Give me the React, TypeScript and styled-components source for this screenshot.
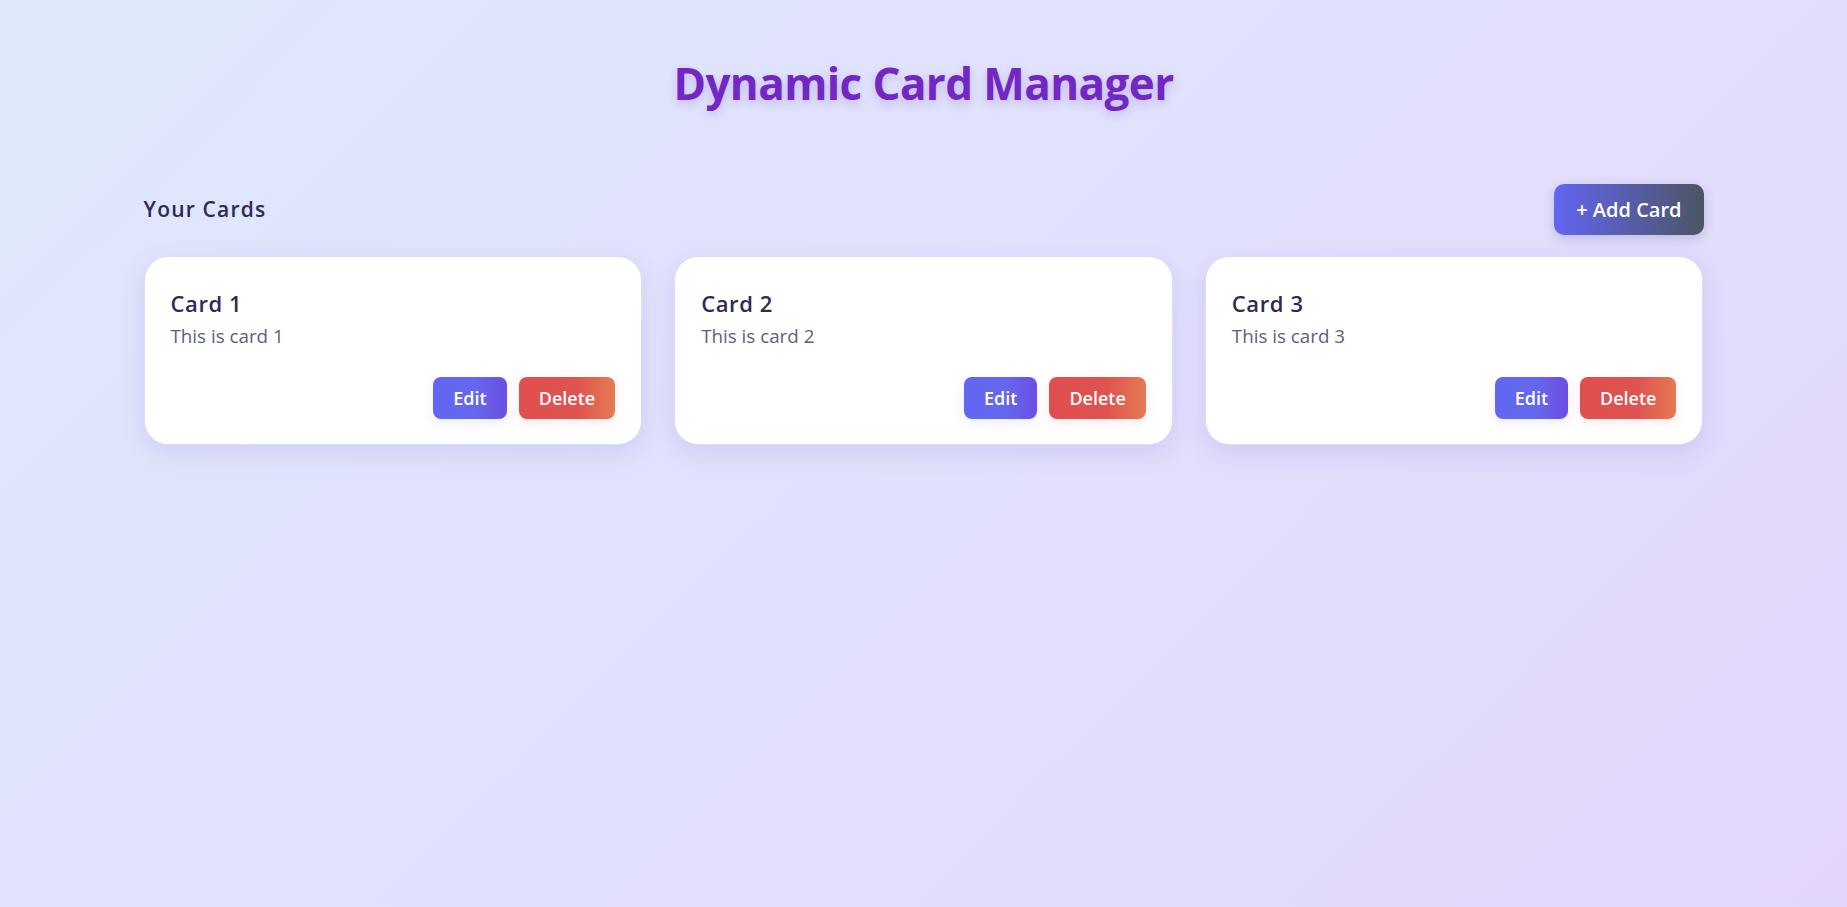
import React, { useState } from 'react';
import styled, { createGlobalStyle } from 'styled-components';

interface CardItem {
  id: number;
  title: string;
  text: string;
}

const GlobalStyle = createGlobalStyle`
  * {
    box-sizing: border-box;
  }

  html,
  body {
    margin: 0;
    padding: 0;
    min-height: 100%;
  }

  body {
    font-family: 'Open Sans', 'Noto Sans', 'Liberation Sans', sans-serif;
    background: linear-gradient(135deg, #dfe8fb 0%, #e1e1fc 50%, #e4d6fb 100%);
    background-attachment: fixed;
    min-height: 100vh;
  }
`;

const initialCards: CardItem[] = [
  { id: 1, title: 'Card 1', text: 'This is card 1' },
  { id: 2, title: 'Card 2', text: 'This is card 2' },
  { id: 3, title: 'Card 3', text: 'This is card 3' },
];

const App: React.FC = () => {
  const [cards, setCards] = useState<CardItem[]>(initialCards);

  const addCard = () => {
    const id = cards.length ? Math.max(...cards.map((c) => c.id)) + 1 : 1;
    setCards([...cards, { id, title: `Card ${id}`, text: `This is card ${id}` }]);
  };

  const deleteCard = (id: number) => {
    setCards(cards.filter((c) => c.id !== id));
  };

  return (
    <>
      <GlobalStyle />
      <Page>
        <Title>Dynamic Card Manager</Title>

        <Container>
          <Header>
            <SectionTitle>Your Cards</SectionTitle>
            <AddButton onClick={addCard}>+ Add Card</AddButton>
          </Header>

          <Grid>
            {cards.map((card) => (
              <Card key={card.id}>
                <CardTitle>{card.title}</CardTitle>
                <CardText>{card.text}</CardText>
                <Actions>
                  <ActionButton $variant="edit">Edit</ActionButton>
                  <ActionButton $variant="delete" onClick={() => deleteCard(card.id)}>
                    Delete
                  </ActionButton>
                </Actions>
              </Card>
            ))}
          </Grid>
        </Container>
      </Page>
    </>
  );
};

// Styled Components
const Page = styled.div`
  min-height: 100vh;
  padding: 57px 0 40px;
`;

const Title = styled.h1`
  margin: 0 0 74px;
  text-align: center;
  font-size: 44px;
  font-weight: 700;
  line-height: 1.2;
  letter-spacing: -0.6px;
  color: #7227c5;
  text-shadow: 0 4px 10px rgba(110, 60, 190, 0.25);
`;

const Container = styled.div`
  max-width: 1560px;
  margin: 0 auto;
`;

const Header = styled.div`
  display: flex;
  align-items: center;
  justify-content: space-between;
  margin-bottom: 21px;
`;

const SectionTitle = styled.h2`
  margin: 0;
  font-size: 21px;
  font-weight: 600;
  letter-spacing: 1.2px;
  color: #2e2a55;
`;

const AddButton = styled.button`
  height: 51px;
  padding: 0 22px;
  border: none;
  border-radius: 10px;
  font-family: inherit;
  font-size: 20px;
  font-weight: 600;
  color: #ffffff;
  background: linear-gradient(90deg, #6366f1 0%, #4b5563 100%);
  box-shadow: 0 4px 12px rgba(60, 60, 110, 0.2);
  cursor: pointer;
`;

const Grid = styled.div`
  display: grid;
  grid-template-columns: repeat(3, 1fr);
  gap: 32px;
`;

const Card = styled.div`
  display: flex;
  flex-direction: column;
  min-height: 189px;
  padding: 31px 26px 25px;
  background: #ffffff;
  border-radius: 24px;
  border: 1px solid rgba(200, 195, 240, 0.6);
  box-shadow: 0 8px 24px rgba(110, 95, 210, 0.16);
`;

const CardTitle = styled.h3`
  margin: 0 0 5px;
  font-size: 22px;
  font-weight: 600;
  letter-spacing: 0.6px;
  color: #2e2a55;
`;

const CardText = styled.p`
  margin: 0;
  font-size: 18.8px;
  color: #5b5f7e;
`;

const Actions = styled.div`
  display: flex;
  justify-content: flex-end;
  gap: 12px;
  margin-top: auto;
`;

const ActionButton = styled.button<{ $variant: 'edit' | 'delete' }>`
  height: 42px;
  padding: 0 20px;
  border: none;
  border-radius: 8px;
  font-family: inherit;
  font-size: 18px;
  font-weight: 600;
  color: #ffffff;
  cursor: pointer;
  background: ${({ $variant }) =>
    $variant === 'edit'
      ? 'linear-gradient(90deg, #6366f1 0%, #6468ee 55%, #6b4fe3 100%)'
      : 'linear-gradient(90deg, #df4f4f 0%, #e05350 60%, #e47b52 100%)'};
  box-shadow: ${({ $variant }) =>
    $variant === 'edit'
      ? '0 4px 12px rgba(99, 102, 241, 0.12)'
      : '0 4px 12px rgba(224, 80, 80, 0.12)'};
`;

export default App;
